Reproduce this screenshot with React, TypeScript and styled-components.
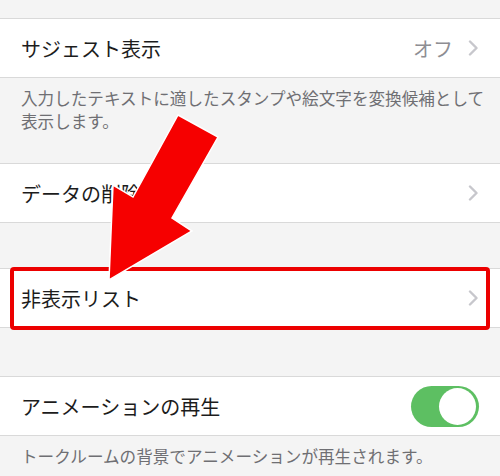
import styled, { createGlobalStyle } from "styled-components";

const GlobalStyle = createGlobalStyle`
  html, body {
    margin: 0;
    padding: 0;
    background: #f4f4f4;
  }
  body {
    font-family: "Noto Sans CJK JP", "Noto Sans", sans-serif;
  }
`;

const Page = styled.div`
  position: relative;
  width: 500px;
  height: 476px;
  overflow: hidden;
  background: #f4f4f4;
`;

const Spacer = styled.div<{ $h: number }>`
  height: ${(p) => p.$h}px;
`;

const Section = styled.div`
  background: #fff;
  border-top: 1px solid #d9d9d9;
  border-bottom: 1px solid #d9d9d9;
`;

const Row = styled.div<{ $highlight?: boolean }>`
  position: relative;
  height: 58px;
  display: flex;
  align-items: center;
  justify-content: space-between;
  padding: 0 21px 0 21px;

  ${(p) =>
    p.$highlight &&
    `
    &::after {
      content: "";
      position: absolute;
      left: 10px;
      right: 10px;
      top: -2px;
      bottom: -3px;
      border: 4px solid #ec0000;
      border-radius: 4px;
      pointer-events: none;
    }
  `}
`;

const Label = styled.span`
  font-size: 20px;
  color: #1c1c1c;
`;

const Accessory = styled.div`
  display: flex;
  align-items: center;
  gap: 15px;
`;

const Value = styled.span`
  font-size: 20px;
  color: #8e8e93;
`;

const Footer = styled.div<{ $h: number }>`
  height: ${(p) => p.$h}px;
  box-sizing: border-box;
  padding: 9px 12px 0 21px;
  font-size: 16.6px;
  line-height: 23px;
  color: #6f6f73;
`;

const Toggle = styled.div<{ $on: boolean }>`
  position: relative;
  width: 68px;
  height: 41px;
  border-radius: 21px;
  background: ${(p) => (p.$on ? "#5dbf62" : "#e5e5ea")};
`;

const Knob = styled.div<{ $on: boolean }>`
  position: absolute;
  top: 2px;
  left: ${(p) => (p.$on ? "28px" : "2px")};
  width: 37px;
  height: 37px;
  border-radius: 50%;
  background: #fff;
`;

const Overlay = styled.svg`
  position: absolute;
  left: 0;
  top: 0;
  pointer-events: none;
`;

function Chevron() {
  return (
    <svg width="11" height="16" viewBox="0 0 11 16">
      <path
        d="M2 1.5 L8.5 8 L2 14.5"
        fill="none"
        stroke="#c7c7cc"
        strokeWidth="2.4"
        strokeLinecap="round"
        strokeLinejoin="round"
      />
    </svg>
  );
}

export default function App() {
  return (
    <Page>
      <GlobalStyle />
      <Spacer $h={18} />
      <Section>
        <Row>
          <Label>サジェスト表示</Label>
          <Accessory>
            <Value>オフ</Value>
            <Chevron />
          </Accessory>
        </Row>
      </Section>
      <Footer $h={85}>
        入力したテキストに適したスタンプや絵文字を変換候補として表示します。
      </Footer>
      <Section>
        <Row>
          <Label>データの削除</Label>
          <Chevron />
        </Row>
      </Section>
      <Spacer $h={45} />
      <Section>
        <Row $highlight>
          <Label>非表示リスト</Label>
          <Chevron />
        </Row>
      </Section>
      <Spacer $h={48} />
      <Section>
        <Row>
          <Label>アニメーションの再生</Label>
          <Toggle $on>
            <Knob $on />
          </Toggle>
        </Row>
      </Section>
      <Footer $h={40}>トークルームの背景でアニメーションが再生されます。</Footer>

      <Overlay width="500" height="476" viewBox="0 0 500 476">
        <polygon
          points="178,115 218,137 172,218 192,231 109,280 113,185 133,197"
          fill="#f60000"
          stroke="#ffffff"
          strokeWidth="1.5"
          strokeLinejoin="miter"
        />
      </Overlay>
    </Page>
  );
}
